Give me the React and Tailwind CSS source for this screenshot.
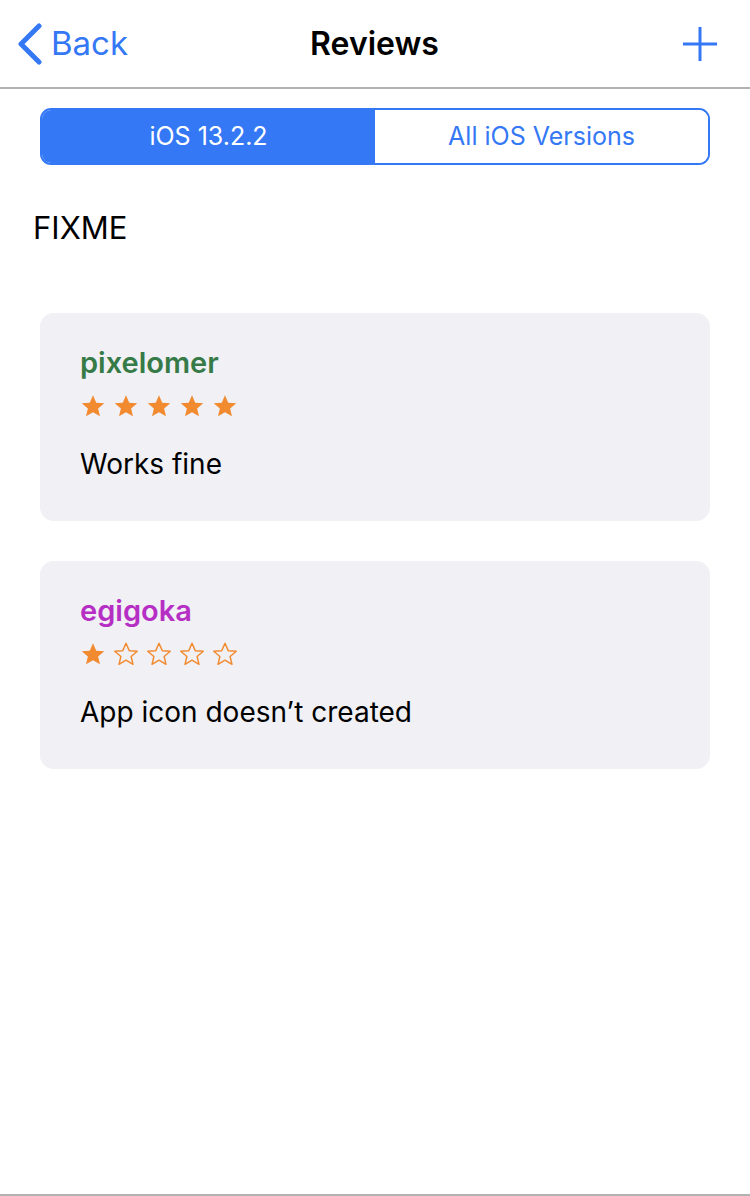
import React, { useState } from 'react';

const Star = ({ filled }) => (
  <svg width="26" height="24" viewBox="0 0 24 23" className="shrink-0">
    <path
      d="M12 1.2l3.1 7.1 7.7.6-5.9 5 1.8 7.5L12 17.4l-6.7 4 1.8-7.5-5.9-5 7.7-.6z"
      fill={filled ? '#f28a30' : 'none'}
      stroke="#f28a30"
      strokeWidth={filled ? 0 : 1.4}
      strokeLinejoin="round"
    />
  </svg>
);

const reviews = [
  { user: 'pixelomer', color: 'text-[#367a47]', rating: 5, text: 'Works fine' },
  { user: 'egigoka', color: 'text-[#b62fc4]', rating: 1, text: 'App icon doesn’t created' },
];

const App = () => {
  const [tab, setTab] = useState(0);

  return (
    <div className="w-[750px] h-[1196px] bg-white flex flex-col font-['Inter','Noto_Sans',sans-serif] border-b-2 border-[#b2b2b2]">
      {/* Nav bar */}
      <div className="h-[89px] shrink-0 flex items-center pl-[17px] pr-[32px] border-b-2 border-[#b2b2b2]">
        <div className="flex-1">
          <button className="flex items-center gap-[8px] text-[#3478f6]">
            <svg width="26" height="42" viewBox="0 0 26 42">
              <path d="M22 3L4 21l18 18" fill="none" stroke="#3478f6" strokeWidth="5" strokeLinecap="round" strokeLinejoin="round" />
            </svg>
            <span className="text-[33px] leading-none">Back</span>
          </button>
        </div>
        <h1 className="text-[32px] font-semibold leading-none text-black ml-[14px]">Reviews</h1>
        <div className="flex-1 flex justify-end">
          <svg width="36" height="36" viewBox="0 0 36 36">
            <path d="M18 1v34M1 18h34" stroke="#3478f6" strokeWidth="3" />
          </svg>
        </div>
      </div>

      {/* Segmented control */}
      <div className="px-[40px] pt-[19px]">
        <div className="flex h-[57px] rounded-[11px] border-2 border-[#3478f6] overflow-hidden">
          {['iOS 13.2.2', 'All iOS Versions'].map((label, i) => (
            <button
              key={label}
              onClick={() => setTab(i)}
              className={
                'flex-1 flex items-center justify-center text-[25px] ' +
                (tab === i ? 'bg-[#3478f6] text-white' : 'bg-white text-[#3478f6]')
              }
            >
              {label}
            </button>
          ))}
        </div>
      </div>

      <p className="px-[33px] pt-[47px] text-[31px] leading-none text-black">FIXME</p>

      {/* Reviews */}
      <div className="px-[40px] pt-[70px] flex flex-col gap-[40px]">
        {reviews.map((r) => (
          <div key={r.user} className="h-[208px] rounded-[14px] bg-[#f0f0f5] px-[40px] pt-[35px]">
            <div className={'text-[29px] font-semibold leading-none ' + r.color}>{r.user}</div>
            <div className="flex gap-[7px] mt-[17px]">
              {[1, 2, 3, 4, 5].map((n) => (
                <Star key={n} filled={n <= r.rating} />
              ))}
            </div>
            <div className="text-[28px] leading-none text-black mt-[32px]">{r.text}</div>
          </div>
        ))}
      </div>
    </div>
  );
};

export default App;
